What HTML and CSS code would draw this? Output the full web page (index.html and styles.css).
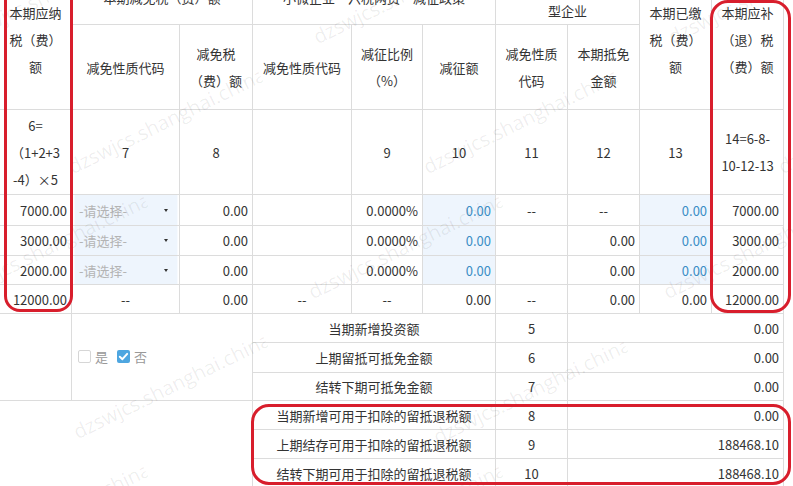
FILE: index.html
```html
<!DOCTYPE html>
<html lang="zh-CN">
<head>
<meta charset="utf-8">
<title>附加税费情况表</title>
<link rel="stylesheet" href="styles.css">
</head>
<body>
<div class="page">
  <table class="grid">
    <colgroup>
      <col class="w72"><col class="w108"><col class="w73"><col class="w99"><col class="w71"><col class="w73"><col class="w72"><col class="w72"><col class="w72"><col class="w72">
    </colgroup>
    <tr class="r-h1">
      <th rowspan="2">本期应纳<br>税（费）<br>额</th>
      <th colspan="2">本期减免税（费）额</th>
      <th colspan="3">小微企业“六税两费”减征政策</th>
      <th colspan="2">试点建设培育产教融合<br>型企业</th>
      <th rowspan="2">本期已缴<br>税（费）<br>额</th>
      <th rowspan="2">本期应补<br>（退）税<br>（费）额</th>
    </tr>
    <tr class="r-h2">
      <th>减免性质代码</th>
      <th>减免税<br>（费）额</th>
      <th>减免性质代码</th>
      <th>减征比例<br>（%）</th>
      <th>减征额</th>
      <th>减免性质<br>代码</th>
      <th>本期抵免<br>金额</th>
    </tr>
    <tr class="r-h3">
      <td>6=<br>（1+2+3<br>-4）×5</td>
      <td>7</td>
      <td>8</td>
      <td></td>
      <td>9</td>
      <td>10</td>
      <td>11</td>
      <td>12</td>
      <td>13</td>
      <td>14=6-8-<br>10-12-13</td>
    </tr>
    <tr class="r-31">
      <td class="num">7000.00</td>
      <td class="sel"><div class="select"><span>-请选择-</span><i class="caret"></i></div></td>
      <td class="num">0.00</td>
      <td></td>
      <td class="num">0.0000%</td>
      <td class="num inp">0.00</td>
      <td>--</td>
      <td>--</td>
      <td class="num inp">0.00</td>
      <td class="num">7000.00</td>
    </tr>
    <tr class="r-30">
      <td class="num">3000.00</td>
      <td class="sel"><div class="select"><span>-请选择-</span><i class="caret"></i></div></td>
      <td class="num">0.00</td>
      <td></td>
      <td class="num">0.0000%</td>
      <td class="num inp">0.00</td>
      <td></td>
      <td class="num">0.00</td>
      <td class="num inp">0.00</td>
      <td class="num">3000.00</td>
    </tr>
    <tr class="r-29">
      <td class="num">2000.00</td>
      <td class="sel"><div class="select"><span>-请选择-</span><i class="caret"></i></div></td>
      <td class="num">0.00</td>
      <td></td>
      <td class="num">0.0000%</td>
      <td class="num inp">0.00</td>
      <td></td>
      <td class="num">0.00</td>
      <td class="num inp">0.00</td>
      <td class="num">2000.00</td>
    </tr>
    <tr class="r-29">
      <td class="num">12000.00</td>
      <td>--</td>
      <td class="num">0.00</td>
      <td>--</td>
      <td>--</td>
      <td class="num">0.00</td>
      <td>--</td>
      <td class="num">0.00</td>
      <td class="num">0.00</td>
      <td class="num">12000.00</td>
    </tr>
    <tr class="r-29">
      <td rowspan="3"></td>
      <td rowspan="3" colspan="2" class="choice">
        <span class="opt"><i class="box"></i>是</span>
        <span class="opt"><i class="box on"><svg viewBox="0 0 12 12" width="12" height="12"><path d="M2.6 6.2 L5 8.5 L9.4 3.6" fill="none" stroke="#fff" stroke-width="1.8" stroke-linecap="round" stroke-linejoin="round"/></svg></i>否</span>
      </td>
      <td colspan="3">当期新增投资额</td>
      <td>5</td>
      <td colspan="3" class="num">0.00</td>
    </tr>
    <tr class="r-30">
      <td colspan="3">上期留抵可抵免金额</td>
      <td>6</td>
      <td colspan="3" class="num">0.00</td>
    </tr>
    <tr class="r-28">
      <td colspan="3">结转下期可抵免金额</td>
      <td>7</td>
      <td colspan="3" class="num">0.00</td>
    </tr>
    <tr class="r-29">
      <td rowspan="3" colspan="3"></td>
      <td colspan="3">当期新增可用于扣除的留抵退税额</td>
      <td>8</td>
      <td colspan="3" class="num">0.00</td>
    </tr>
    <tr class="r-29">
      <td colspan="3">上期结存可用于扣除的留抵退税额</td>
      <td>9</td>
      <td colspan="3" class="num">188468.10</td>
    </tr>
    <tr class="r-29">
      <td colspan="3">结转下期可用于扣除的留抵退税额</td>
      <td>10</td>
      <td colspan="3" class="num">188468.10</td>
    </tr>
  </table>

  <div class="wm wm1">dzswjcs.shanghai.chinatax.gov.cn</div>
  <div class="wm wm2">dzswjcs.shanghai.chinatax.gov.cn</div>
  <div class="wm wm3">dzswjcs.shanghai.chinatax.gov.cn</div>
  <div class="wm wm4">dzswjcs.shanghai.chinatax.gov.cn</div>
  <div class="wm wm5">dzswjcs.shanghai.chinatax.gov.cn</div>
  <div class="wm wm6">dzswjcs.shanghai.chinatax.gov.cn</div>
  <div class="wm wm7">dzswjcs.shanghai.chinatax.gov.cn</div>
  <div class="wm wm8">dzswjcs.shanghai.chinatax.gov.cn</div>
  <div class="wm wm9">dzswjcs.shanghai.chinatax.gov.cn</div>
  <div class="wm wm10">dzswjcs.shanghai.chinatax.gov.cn</div>
  <div class="wm wm11">dzswjcs.shanghai.chinatax.gov.cn</div>
  <div class="wm wm12">dzswjcs.shanghai.chinatax.gov.cn</div>
  <div class="wm wm13">dzswjcs.shanghai.chinatax.gov.cn</div>
  <div class="wm wm14">dzswjcs.shanghai.chinatax.gov.cn</div>

  <div class="mark mark-left"></div>
  <div class="mark mark-right"></div>
  <div class="mark mark-bottom"></div>
</div>
</body>
</html>
```
FILE: styles.css
```css
html, body {
  margin: 0;
  padding: 0;
  background: #fff;
}

body {
  font-family: "Noto Sans CJK SC", "Microsoft YaHei", sans-serif;
  font-size: 13px;
  color: #333;
}

.page {
  position: relative;
  width: 793px;
  height: 486px;
  overflow: hidden;
}

.grid {
  border-collapse: collapse;
  table-layout: fixed;
  width: 785px;
  margin: -31px 0 0 -1px;
}

.w72 { width: 72px; }
.w108 { width: 108px; }
.w73 { width: 73px; }
.w99 { width: 99px; }
.w71 { width: 71px; }

.grid th,
.grid td {
  border: 1px solid #dcdcdc;
  padding: 0 5px;
  line-height: 27px;
  font-weight: normal;
  text-align: center;
  vertical-align: middle;
  white-space: nowrap;
  overflow: hidden;
}

.r-h1 { height: 55px; }
.r-h2 { height: 85px; }
.r-h3 { height: 85px; }
.r-31 { height: 31px; }
.r-30 { height: 30px; }
.r-29 { height: 29px; }
.r-28 { height: 28px; }

.grid td.num {
  text-align: right;
  padding-right: 4px;
}

.grid td.inp {
  background: #eef5fd;
  color: #3a8dc6;
}

.grid td.sel {
  padding: 0 2px;
  background: linear-gradient(to right, #fff 2px, #eef5fd 2px, #eef5fd calc(100% - 2px), #fff calc(100% - 2px));
}

.select {
  display: flex;
  align-items: center;
  justify-content: space-between;
  padding: 0 9px 0 5px;
  color: #b4b4b4;
  text-align: left;
}

.caret {
  width: 0;
  height: 0;
  border-left: 2.5px solid transparent;
  border-right: 2.5px solid transparent;
  border-top: 3px solid #333;
}

.grid td.choice {
  text-align: left;
  padding-left: 6px;
  color: #999;
}

.opt {
  display: inline-flex;
  align-items: center;
  margin-right: 6px;
}

.box {
  display: inline-block;
  width: 11px;
  height: 11px;
  border: 1px solid #d6d6d6;
  border-radius: 2px;
  margin-right: 4px;
  background: #fff;
}

.box.on {
  width: 13px;
  height: 13px;
  border: none;
  background: #4ea6e0;
}

.box svg {
  display: block;
  width: 13px;
  height: 13px;
}

/* watermark */
.wm {
  position: absolute;
  width: 212px;
  overflow: hidden;
  white-space: nowrap;
  font-family: "Open Sans", "Noto Sans", sans-serif;
  font-size: 20px;
  line-height: 24px;
  color: rgba(0, 0, 0, 0.07);
  transform: rotate(-26deg);
  transform-origin: 0 100%;
  pointer-events: none;
}

.wm1 { left: -35px; top: 25px; }
.wm2 { left: 320px; top: 25px; }
.wm3 { left: 675px; top: 25px; }
.wm4 { left: 75px; top: 155px; }
.wm5 { left: 430px; top: 155px; }
.wm6 { left: 785px; top: 155px; }
.wm7 { left: -40px; top: 280px; }
.wm8 { left: 315px; top: 280px; }
.wm9 { left: 670px; top: 280px; }
.wm10 { left: 80px; top: 420px; }
.wm11 { left: 440px; top: 425px; }
.wm12 { left: -40px; top: 550px; }
.wm13 { left: 315px; top: 550px; }
.wm14 { left: 430px; top: -105px; }

/* red annotation marks */
.mark {
  position: absolute;
  box-sizing: border-box;
  border: 3px solid #d81e2c;
  pointer-events: none;
}

.mark-left {
  left: 4px;
  top: -30px;
  width: 69px;
  height: 342px;
  border-radius: 16px;
}

.mark-right {
  left: 710px;
  top: 0;
  width: 81px;
  height: 313px;
  border-radius: 18px;
}

.mark-bottom {
  left: 251px;
  top: 404px;
  width: 540px;
  height: 81px;
  border-radius: 18px;
}
```
